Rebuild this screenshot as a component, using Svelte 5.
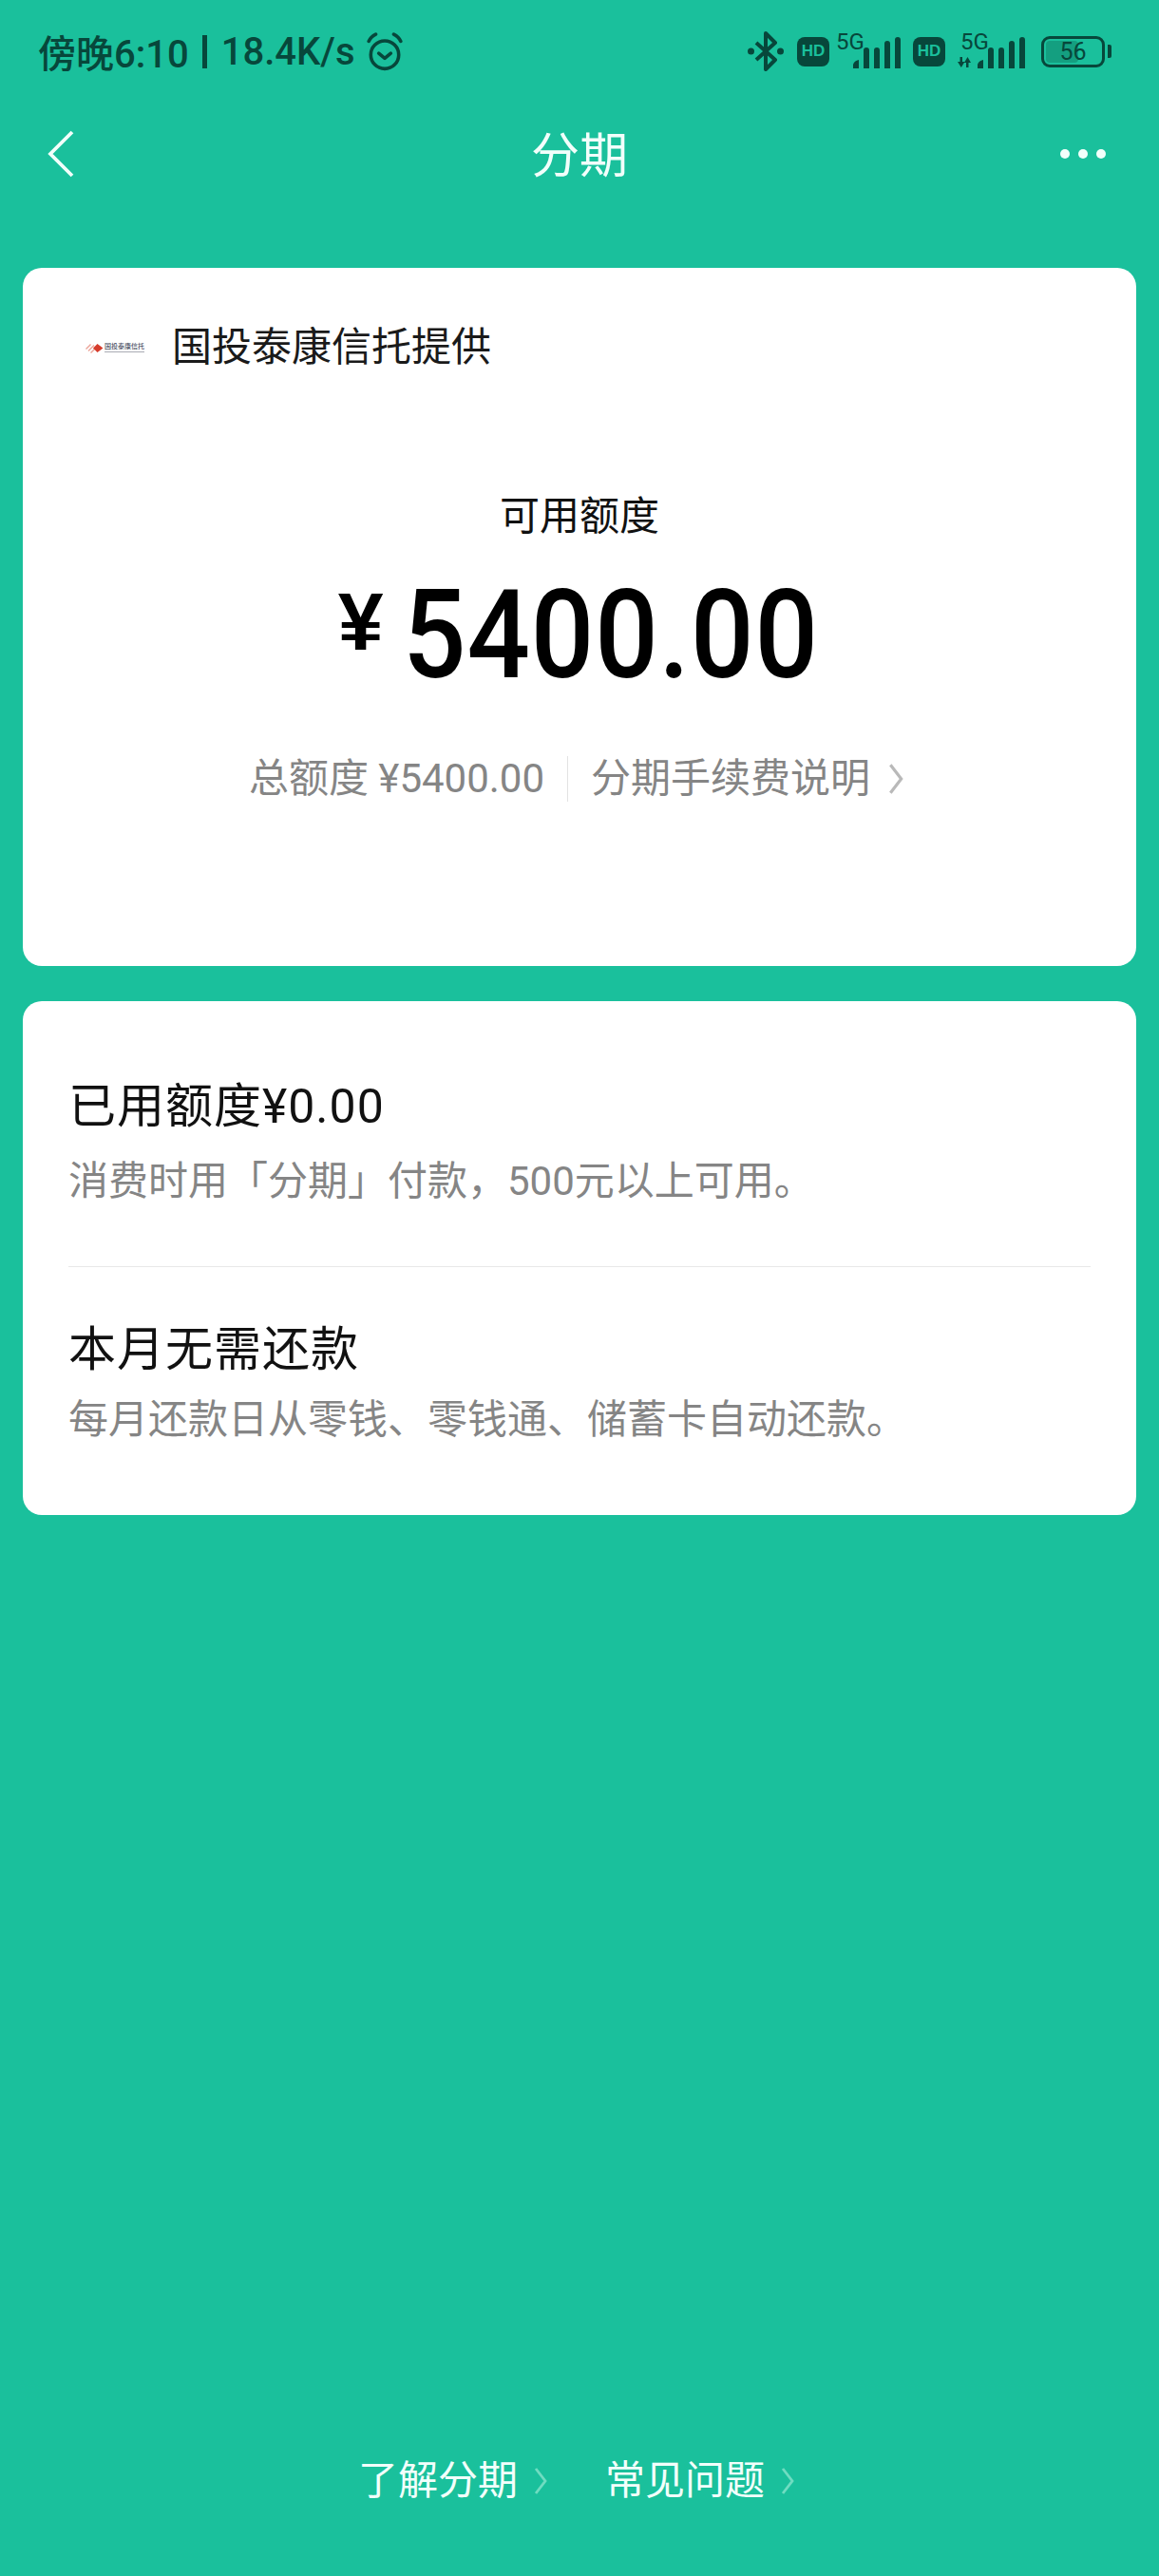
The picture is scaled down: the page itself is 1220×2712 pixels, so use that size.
<script>
  const rows = [
    { title: '已用额度¥0.00', sub: '消费时用「分期」付款，500元以上可用。' },
    { title: '本月无需还款', sub: '每月还款日从零钱、零钱通、储蓄卡自动还款。' }
  ];
  const links = ['了解分期', '常见问题'];
</script>

{#snippet chevron(cls)}
  <svg class={cls} viewBox="0 0 14 30" fill="none" stroke="currentColor" stroke-width="2.8">
    <path d="M2 2 L12 15 L2 28" />
  </svg>
{/snippet}

{#snippet signal(arrows)}
  <svg class="signal" class:wide={arrows} viewBox={arrows ? '0 0 71 42' : '0 0 68 42'} fill="#07473b">
    <text x={arrows ? 3 : 0} y="19" class="five">5G</text>
    {#if arrows}
      <path d="M0 32h2.500v-5h2.500v5h2.500l-3.700 6zM9 33h-2l3.500-6 3.500 6h-2.500v5h-2.500z" />
    {/if}
    <g transform={arrows ? 'translate(20 0)' : 'translate(17 0)'}>
      <path d="M1 39v-4q1-4 6-5v9zM12 39v-19q0-3 3-3t3 3v19zM23 39v-19q0-3 3-3t3 3v19zM34 39v-26q0-3 3-3t3 3v26zM45 39v-30q0-3 3-3t3 3v30z" />
    </g>
  </svg>
{/snippet}

<div class="page">
  <header class="status">
    <div class="status-left">
      <span>傍晚6:10</span>
      <i class="pipe"></i>
      <span>18.4K/s</span>
      <svg class="alarm" viewBox="0 0 36 39" fill="none" stroke="#07473b" stroke-width="3.400" stroke-linecap="round" stroke-linejoin="round">
        <circle cx="18" cy="22.500" r="14" />
        <path d="M12 21l6 5 6-5" />
        <path d="M2 9q2-4.500 7-7M34 9q-2-4.500-7-7" />
      </svg>
    </div>
    <div class="status-right">
      <svg class="bt" viewBox="0 0 38 42" fill="none" stroke="#07473b" stroke-width="4" stroke-linejoin="round">
        <path d="M9 12l20 18-10 10V2l10 10L9 30" />
        <circle cx="3.500" cy="21" r="3.500" fill="#07473b" stroke="none" />
        <circle cx="34.500" cy="21" r="3.500" fill="#07473b" stroke="none" />
      </svg>
      <span class="hd">HD</span>
      {@render signal(false)}
      <span class="hd">HD</span>
      {@render signal(true)}
      <div class="battery">
        <div class="battery-body">
          <div class="battery-fill"></div>
          <span class="battery-num">56</span>
        </div>
        <i class="battery-cap"></i>
      </div>
    </div>
  </header>

  <nav class="nav">
    <svg class="back" viewBox="0 0 28 50" fill="none" stroke="#f2fffb" stroke-width="3.800">
      <path d="M26 2 L3 25 L26 48" />
    </svg>
    <h1>分期</h1>
    <div class="more"><i></i><i></i><i></i></div>
  </nav>

  <section class="card limit">
    <div class="provider">
      <div class="logo">
        <svg viewBox="0 0 19 11">
          <path d="M0 6l5-5 1 1-5 5zM2.500 8l6-6 1 1-6 6zM5 10l5-5 1 1-5 5z" fill="#eca59a" />
          <path d="M8 5.500l4.500-4.500 6 4.500-6 4.500z" fill="#d63c2c" />
        </svg>
        <div class="logo-text">
          <span>国投泰康信托</span>
          <i></i>
        </div>
      </div>
      <span>国投泰康信托提供</span>
    </div>
    <p class="label">可用额度</p>
    <div class="amount"><span class="yen">¥</span><span class="num">5400.00</span></div>
    <div class="meta">
      <span>总额度 ¥5400.00</span>
      <i class="divider"></i>
      <span>分期手续费说明</span>
      {@render chevron('meta-arrow')}
    </div>
  </section>

  <section class="card info">
    {#each rows as row, i}
      <div class="row" class:last={i === rows.length - 1}>
        <h2>{row.title}</h2>
        <p>{row.sub}</p>
      </div>
    {/each}
  </section>

  <footer class="links">
    {#each links as link}
      <span class="link">{link}{@render chevron('link-arrow')}</span>
    {/each}
  </footer>
</div>

<style>
  :global(body) {
    background: #1ac09c;
  }

  .page {
    width: 1220px;
    height: 2712px;
    background: #1ac09c;
    display: flex;
    flex-direction: column;
    font-family: Roboto, "Noto Sans CJK SC", sans-serif;
    overflow: hidden;
  }

  .status {
    height: 108px;
    padding: 0 50px 0 40px;
    display: flex;
    justify-content: space-between;
    align-items: center;
    color: #07473b;
    box-sizing: border-box;
  }

  .status-left {
    display: flex;
    align-items: center;
    font-size: 40px;
    font-weight: 500;
  }

  .pipe {
    width: 5px;
    height: 35px;
    background: #07473b;
    margin: 0 15px 0 14px;
  }

  .alarm {
    width: 38px;
    height: 41px;
    margin-left: 12px;
  }

  .status-right {
    display: flex;
    align-items: center;
  }

  .bt {
    width: 38px;
    height: 42px;
  }

  .hd {
    width: 34px;
    height: 31px;
    margin-left: 14px;
    background: #07473b;
    color: #1ac09c;
    border-radius: 8px;
    font-size: 17px;
    font-weight: 700;
    display: flex;
    align-items: center;
    justify-content: center;
    font-family: "Liberation Sans", sans-serif;
  }

  .signal {
    width: 68px;
    height: 42px;
    margin-left: 7px;
    margin-right: -1px;
    overflow: visible;
  }

  .signal.wide {
    width: 71px;
    margin-left: 13px;
    margin-right: 0;
  }

  .five {
    font-family: Roboto, sans-serif;
    font-size: 24px;
  }

  .battery {
    display: flex;
    align-items: center;
    margin-left: 17px;
  }

  .battery-body {
    width: 67px;
    height: 33px;
    border: 3px solid #07473b;
    border-radius: 9px;
    box-sizing: border-box;
    position: relative;
    display: flex;
    align-items: center;
    justify-content: center;
    overflow: hidden;
  }

  .battery-fill {
    position: absolute;
    left: 2px;
    top: 2px;
    bottom: 2px;
    width: 56%;
    background: #149f80;
    border-radius: 4px;
  }

  .battery-num {
    position: relative;
    font-size: 25px;
    line-height: 1;
  }

  .battery-cap {
    width: 4px;
    height: 14px;
    margin-left: 3px;
    background: #07473b;
    border-radius: 0 2px 2px 0;
  }

  .nav {
    height: 108px;
    padding: 0 56px 0 50px;
    display: flex;
    align-items: center;
    justify-content: space-between;
    position: relative;
  }

  .back {
    width: 28px;
    height: 50px;
  }

  h1 {
    margin: 0;
    position: absolute;
    left: 0;
    right: 0;
    top: 31px;
    text-align: center;
    color: #f2fffb;
    font-size: 51px;
    font-weight: 400;
    line-height: 1;
  }

  .more {
    display: flex;
    gap: 9px;
  }

  .more i {
    width: 10px;
    height: 10px;
    border-radius: 50%;
    background: #f2fffb;
  }

  .card {
    background: #fff;
    border-radius: 20px;
    margin: 0 24px;
  }

  .limit {
    margin-top: 66px;
    height: 735px;
    box-sizing: border-box;
    display: flex;
    flex-direction: column;
    align-items: center;
  }

  .provider {
    align-self: flex-start;
    display: flex;
    align-items: center;
    margin: 58px 0 0 66px;
    font-size: 42px;
    line-height: 52px;
    color: #1a1a1a;
  }

  .logo {
    display: flex;
    align-items: center;
    gap: 1px;
    width: 62px;
    margin-right: 29px;
  }

  .logo svg {
    width: 19px;
    height: 11px;
    flex: none;
  }

  .logo-text {
    display: flex;
    flex-direction: column;
    width: 42px;
    flex: none;
  }

  .logo-text span {
    font-size: 7px;
    line-height: 8px;
    font-weight: 500;
    color: #4a4f63;
  }

  .logo-text i {
    height: 1px;
    margin-top: 1px;
    background: #a8aab3;
  }

  .label {
    margin: 126px 0 0;
    font-size: 42px;
    line-height: 52px;
    color: #111;
  }

  .amount {
    margin-top: 39px;
    display: flex;
    align-items: flex-start;
    color: #000;
    line-height: 1;
    height: 130px;
    transform: translateX(-1px);
  }

  .yen {
    font-size: 86px;
    font-weight: 700;
    font-family: "Liberation Sans", sans-serif;
    margin: 2px 20px 0 0;
  }

  .num {
    display: inline-block;
    font-size: 130px;
    font-weight: 500;
    letter-spacing: 1px;
    margin: -5px -48px 0 0;
    transform: scaleX(0.9);
    transform-origin: left top;
  }

  .meta {
    margin-top: 55px;
    display: flex;
    align-items: center;
    font-size: 42px;
    line-height: 52px;
    color: #858585;
    transform: translateX(-3px);
  }

  .divider {
    width: 1px;
    height: 48px;
    background: #e3e3e3;
    margin: 0 24px;
  }

  :global(.meta-arrow) {
    width: 18px;
    height: 34px;
    margin-left: 18px;
    color: #b9b9b9;
  }

  .info {
    margin-top: 37px;
    height: 541px;
    box-sizing: border-box;
    padding: 0 48px;
  }

  .row {
    height: 280px;
    padding-top: 83px;
    box-sizing: border-box;
    border-bottom: 1px solid #e8e8e8;
  }

  .row.last {
    height: auto;
    padding-top: 59px;
    border-bottom: 0;
  }

  h2 {
    margin: 0;
    font-size: 50px;
    line-height: 56px;
    font-weight: 400;
    color: #111;
    letter-spacing: 1px;
  }

  .row p {
    margin: 25px 0 0;
    font-size: 42px;
    line-height: 52px;
    color: #858585;
  }

  .row.last p {
    margin-top: 20px;
  }

  .links {
    margin-top: auto;
    margin-bottom: 74px;
    display: flex;
    justify-content: center;
    gap: 60px;
    padding-right: 6px;
  }

  .link {
    display: flex;
    align-items: center;
    font-size: 42px;
    line-height: 52px;
    color: #f2fffb;
  }

  :global(.link-arrow) {
    width: 16px;
    height: 30px;
    margin-left: 16px;
    color: #6fdcc1;
  }
</style>
